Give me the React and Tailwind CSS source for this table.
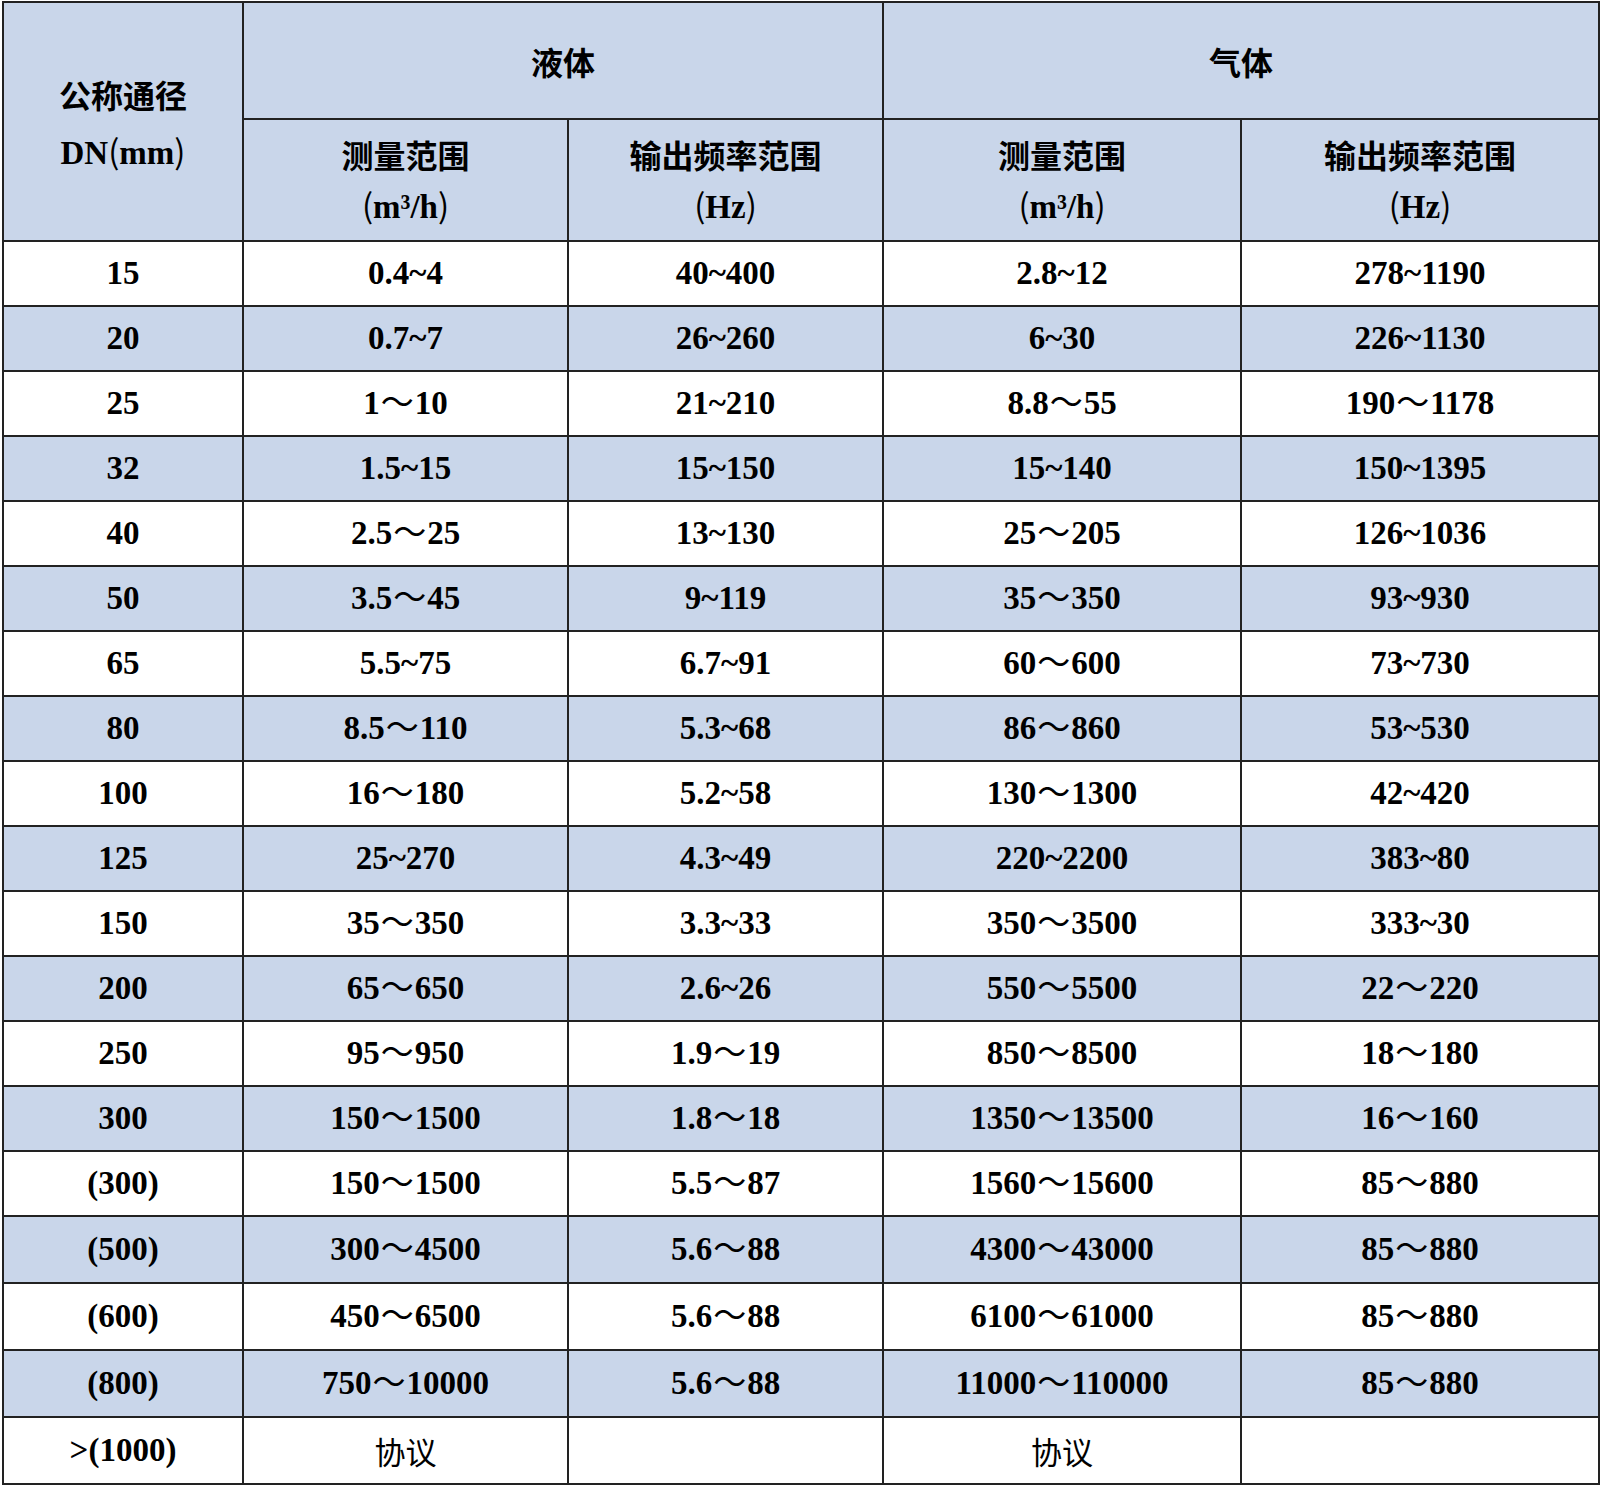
import React from "react";

const rows = [
  ["15", "0.4~4", "40~400", "2.8~12", "278~1190"],
  ["20", "0.7~7", "26~260", "6~30", "226~1130"],
  ["25", "1～10", "21~210", "8.8～55", "190～1178"],
  ["32", "1.5~15", "15~150", "15~140", "150~1395"],
  ["40", "2.5～25", "13~130", "25～205", "126~1036"],
  ["50", "3.5～45", "9~119", "35～350", "93~930"],
  ["65", "5.5~75", "6.7~91", "60～600", "73~730"],
  ["80", "8.5～110", "5.3~68", "86～860", "53~530"],
  ["100", "16～180", "5.2~58", "130～1300", "42~420"],
  ["125", "25~270", "4.3~49", "220~2200", "383~80"],
  ["150", "35～350", "3.3~33", "350～3500", "333~30"],
  ["200", "65～650", "2.6~26", "550～5500", "22～220"],
  ["250", "95～950", "1.9～19", "850～8500", "18～180"],
  ["300", "150～1500", "1.8～18", "1350～13500", "16～160"],
  ["(300)", "150～1500", "5.5～87", "1560～15600", "85～880"],
  ["(500)", "300～4500", "5.6～88", "4300～43000", "85～880"],
  ["(600)", "450～6500", "5.6～88", "6100～61000", "85～880"],
  ["(800)", "750～10000", "5.6～88", "11000～110000", "85～880"],
];

const cell = "border-2 border-[#222] text-center align-middle p-0";
const P = ({ children }) => (
  <span className="font-['Noto_Sans_CJK_SC',sans-serif] font-normal">{children}</span>
);

function Val({ v }) {
  const parts = v.split("～");
  if (parts.length === 1) return v;
  return (
    <>
      {parts[0]}
      <span className="font-normal px-[1px]">～</span>
      {parts[1]}
    </>
  );
}

const cjkHead = "font-['Noto_Sans_CJK_SC',sans-serif] font-bold text-[32px]";

export default function App() {
  return (
    <div className="w-[1600px] h-[1485px] bg-white pt-[1px] pl-[2px] font-['Liberation_Serif','Noto_Sans_CJK_SC',serif] text-black">
      <table className="border-collapse table-fixed w-[1597px]">
        <colgroup>
          <col className="w-[240px]" />
          <col className="w-[325px]" />
          <col className="w-[315px]" />
          <col className="w-[358px]" />
          <col className="w-[358px]" />
        </colgroup>
        <thead>
          <tr className="h-[117px] bg-[#c9d6ea]">
            <th rowSpan={2} className={cell}>
              <div className="flex flex-col items-center leading-[56px] pt-[4px]">
                <span className={cjkHead}>公称通径</span>
                <span className="font-bold text-[33px]">DN<P>(</P>mm<P>)</P></span>
              </div>
            </th>
            <th colSpan={2} className={cell}>
              <span className={cjkHead}>液体</span>
            </th>
            <th colSpan={2} className={cell}>
              <span className={cjkHead}>气体</span>
            </th>
          </tr>
          <tr className="h-[122px] bg-[#c9d6ea]">
            {[
              ["测量范围", "m³/h"],
              ["输出频率范围", "Hz"],
              ["测量范围", "m³/h"],
              ["输出频率范围", "Hz"],
            ].map(([a, b], i) => (
              <th key={i} className={cell}>
                <div className="flex flex-col items-center leading-[50px]">
                  <span className={cjkHead}>{a}</span>
                  <span className="font-bold text-[33px]"><P>(</P>{b}<P>)</P></span>
                </div>
              </th>
            ))}
          </tr>
        </thead>
        <tbody>
          {rows.map((r, i) => (
            <tr key={i} className={(i < 15 ? "h-[65px] " : "h-[67px] ") + (i % 2 === 1 ? "bg-[#c9d6ea]" : "bg-white")}>
              {r.map((v, j) => (
                <td key={j} className={cell + " font-bold text-[33px] leading-none"}>
                  <Val v={v} />
                </td>
              ))}
            </tr>
          ))}
          <tr className="h-[67px] bg-white">
            <td className={cell + " font-bold text-[33px] leading-none"}>&gt;(1000)</td>
            <td className={cell + " font-['Noto_Sans_CJK_SC',sans-serif] font-normal text-[31px] leading-none"}>协议</td>
            <td className={cell}></td>
            <td className={cell + " font-['Noto_Sans_CJK_SC',sans-serif] font-normal text-[31px] leading-none"}>协议</td>
            <td className={cell}></td>
          </tr>
        </tbody>
      </table>
    </div>
  );
}
